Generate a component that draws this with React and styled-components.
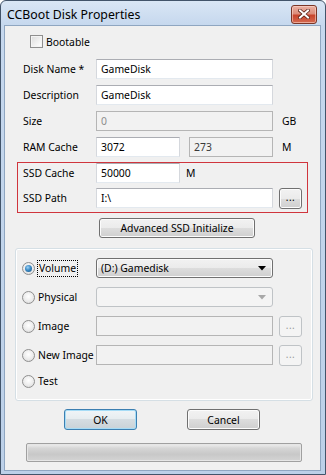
import React from "react";
import styled, { createGlobalStyle, css } from "styled-components";

const GlobalStyle = createGlobalStyle`
  html, body { margin: 0; padding: 0; background: #ffffff; }
  body { font-family: "Noto Sans", "Open Sans", sans-serif; font-size: 10.4px; color: #000; }
  * { box-sizing: border-box; }
`;

const Window = styled.div`
  width: 326px;
  height: 475px;
  display: flex;
  flex-direction: column;
  border: 1px solid #42546a;
  border-radius: 6px 6px 0 0;
  background: linear-gradient(to bottom, #d9e6f5 0px, #c6d8ee 24px, #bcd0e8 100%);
  overflow: hidden;
`;

const TitleBar = styled.div`
  height: 24px;
  flex: none;
  display: flex;
  align-items: center;
  justify-content: space-between;
  padding: 0 8px 0 6px;
`;

const Title = styled.span`
  font-size: 12.3px;
  color: #000;
  margin-top: 2px;
  white-space: nowrap;
`;

const CloseButton = styled.div`
  width: 26px;
  height: 19px;
  margin-top: 2px;
  border: 1px solid #7a3526;
  border-radius: 3px;
  background: linear-gradient(to bottom, #eab0a2 0%, #dc8d7b 45%, #c8442c 55%, #d56a50 100%);
  box-shadow: inset 0 0 0 1px rgba(255, 220, 210, 0.55);
  display: flex;
  align-items: center;
  justify-content: center;
`;

const Client = styled.div`
  flex: 1;
  margin: 0 4px 3px 3px;
  border: 1px solid #8fa6c1;
  background: #f0f0f0;
  display: flex;
  flex-direction: column;
  white-space: nowrap;
`;

const CheckRow = styled.label`
  display: flex;
  align-items: center;
  gap: 3px;
  margin: 9px 0 0 25px;
  height: 13px;
`;

const CheckBox = styled.span`
  width: 13px;
  height: 13px;
  border: 1px solid #8f8f8f;
  background: linear-gradient(135deg, #dcdcdc 0%, #f6f6f6 70%, #ffffff 100%);
  box-shadow: inset 0 0 0 1px #f4f4f4;
`;

const Form = styled.div`
  display: flex;
  flex-direction: column;
  gap: 6px;
  margin: 11px 0 0 18px;
`;

const Row = styled.div`
  display: flex;
  align-items: center;
  height: 20px;
`;

const Label = styled.span`
  width: 73px;
  flex: none;
`;

const Fields = styled.div`
  display: flex;
  gap: 9px;
  width: ${(p) => p.$w || 177}px;
`;

const Box = styled.div`
  height: 20px;
  flex: 1;
  display: flex;
  align-items: center;
  padding-left: 4px;
  border: 1px solid;
  border-color: #abadb3 #d5d8dd #e3e9ef #d5d8dd;
  background: #ffffff;
  color: #000;
  ${(p) =>
    p.$disabled &&
    css`
      background: #f2f2f2;
      border-color: #b5b5b5;
      color: ${p.$dim ? "#8d8d8d" : "#3a3a3a"};
    `}
`;

const Suffix = styled.span`
  margin-left: ${(p) => p.$gap ?? 9}px;
`;

const SsdBox = styled.div`
  margin: 5px 0 0 12px;
  width: 291px;
  border: 1px solid #d0353d;
  padding: 0 0 4px 5px;
  display: flex;
  flex-direction: column;
  gap: 5px;
`;

const buttonBase = css`
  display: flex;
  align-items: center;
  justify-content: center;
  border: 1px solid #707070;
  border-radius: 3px;
  background: linear-gradient(to bottom, #f2f2f2 0%, #ebebeb 50%, #dddddd 50%, #cfcfcf 100%);
  box-shadow: inset 0 0 0 1px #fcfcfc;
  color: #000;
`;

const Button = styled.div`
  ${buttonBase};
  width: ${(p) => p.$w}px;
  height: ${(p) => p.$h || 20}px;
  ${(p) =>
    p.$default &&
    css`
      border-color: #3c7fb1;
      box-shadow: inset 0 0 0 1px #a6dcf6;
      background: linear-gradient(to bottom, #f0f5f8 0%, #e6ecef 50%, #d5dde2 50%, #c9d2d7 100%);
    `}
`;

const BrowseButton = styled.div`
  ${buttonBase};
  width: 23px;
  height: 21px;
  margin-left: 6px;
  font-size: 10px;
  letter-spacing: 0.5px;
  padding-bottom: 3px;
  ${(p) =>
    p.$disabled &&
    css`
      border-color: #bfc3c6;
      background: #f4f4f4;
      box-shadow: none;
      color: #9a9a9a;
    `}
`;

const AdvancedRow = styled.div`
  margin: 5px 0 0 94px;
`;

const Group = styled.div`
  margin: 10px 0 0 10px;
  width: 298px;
  height: 153px;
  border: 1px solid #d5dfe5;
  border-radius: 3px;
  box-shadow: inset 0 0 0 1px #ffffff;
  padding: 9px 0 0 6px;
  display: flex;
  flex-direction: column;
  gap: 9px;
`;

const GroupRow = styled.div`
  display: flex;
  align-items: center;
  height: ${(p) => p.$h || 20}px;
`;

const RadioLabel = styled.div`
  width: 74px;
  flex: none;
  display: flex;
  align-items: center;
  gap: 3px;
`;

const Radio = styled.span`
  width: 13px;
  height: 13px;
  flex: none;
  border-radius: 50%;
  border: 1px solid #8f8f8f;
  background: radial-gradient(circle at 50% 40%, #ffffff 0%, #ececec 55%, #d3d3d3 100%);
  display: flex;
  align-items: center;
  justify-content: center;
  &::after {
    content: "";
    display: ${(p) => (p.$on ? "block" : "none")};
    width: 7px;
    height: 7px;
    border-radius: 50%;
    background: radial-gradient(circle at 40% 35%, #9fd3f5 0%, #3b8ac5 45%, #16507f 100%);
  }
`;

const FocusText = styled.span`
  outline: 1px dotted #000;
  outline-offset: 0;
  padding: 0 1px;
  line-height: 15px;
`;

const Combo = styled.div`
  width: 177px;
  height: 20px;
  display: flex;
  align-items: center;
  justify-content: space-between;
  padding: 0 6px 0 4px;
  border: 1px solid #707070;
  border-radius: 3px;
  background: linear-gradient(to bottom, #f2f2f2 0%, #ebebeb 50%, #dddddd 50%, #cfcfcf 100%);
  box-shadow: inset 0 0 0 1px #fcfcfc;
  ${(p) =>
    p.$disabled &&
    css`
      border-color: #bfc3c6;
      background: #f4f4f4;
      box-shadow: none;
    `}
`;

const Field = styled(Box)`
  flex: none;
  width: 177px;
`;

const ButtonRow = styled.div`
  display: flex;
  gap: 50px;
  margin: 8px 0 0 59px;
`;

const Progress = styled.div`
  margin: 13px 0 0 21px;
  width: 276px;
  height: 19px;
  border: 1px solid #a0a0a0;
  border-radius: 2px;
  background: linear-gradient(to bottom, #efefef 0%, #d6d6d6 25%, #c8c8c8 60%, #d4d4d4 100%);
  box-shadow: inset 0 0 0 1px #e6e6e6;
`;

const Arrow = ({ color }) => (
  <svg width="8" height="5" viewBox="0 0 8 5">
    <path d="M0 0 H8 L4 4.5 Z" fill={color} />
  </svg>
);

export default function App() {
  return (
    <>
      <GlobalStyle />
      <Window>
        <TitleBar>
          <Title>CCBoot Disk Properties</Title>
          <CloseButton>
            <svg width="12" height="10" viewBox="0 0 12 10">
              <path d="M2 1.5 L10 8.5 M10 1.5 L2 8.5" stroke="#5a2318" strokeWidth="3.6" strokeLinecap="square" />
              <path d="M2 1.5 L10 8.5 M10 1.5 L2 8.5" stroke="#ffffff" strokeWidth="2" strokeLinecap="square" />
            </svg>
          </CloseButton>
        </TitleBar>
        <Client>
          <CheckRow>
            <CheckBox />
            <span>Bootable</span>
          </CheckRow>

          <Form>
            <Row>
              <Label>Disk Name *</Label>
              <Fields>
                <Box>GameDisk</Box>
              </Fields>
            </Row>
            <Row>
              <Label>Description</Label>
              <Fields>
                <Box>GameDisk</Box>
              </Fields>
            </Row>
            <Row>
              <Label>Size</Label>
              <Fields>
                <Box $disabled $dim>0</Box>
              </Fields>
              <Suffix>GB</Suffix>
            </Row>
            <Row>
              <Label>RAM Cache</Label>
              <Fields>
                <Box>3072</Box>
                <Box $disabled>273</Box>
              </Fields>
              <Suffix>M</Suffix>
            </Row>
          </Form>

          <SsdBox>
            <Row>
              <Label>SSD Cache</Label>
              <Fields $w={84}>
                <Box>50000</Box>
              </Fields>
              <Suffix $gap={6}>M</Suffix>
            </Row>
            <Row>
              <Label>SSD Path</Label>
              <Fields>
                <Box>I:\</Box>
              </Fields>
              <BrowseButton>...</BrowseButton>
            </Row>
          </SsdBox>

          <AdvancedRow>
            <Button $w={156}>Advanced SSD Initialize</Button>
          </AdvancedRow>

          <Group>
            <GroupRow>
              <RadioLabel>
                <Radio $on />
                <FocusText>Volume</FocusText>
              </RadioLabel>
              <Combo>
                <span>(D:) Gamedisk</span>
                <Arrow color="#000" />
              </Combo>
            </GroupRow>
            <GroupRow>
              <RadioLabel>
                <Radio />
                <span>Physical</span>
              </RadioLabel>
              <Combo $disabled>
                <span />
                <Arrow color="#a8a8a8" />
              </Combo>
            </GroupRow>
            <GroupRow>
              <RadioLabel>
                <Radio />
                <span>Image</span>
              </RadioLabel>
              <Field $disabled />
              <BrowseButton $disabled>...</BrowseButton>
            </GroupRow>
            <GroupRow>
              <RadioLabel>
                <Radio />
                <span>New Image</span>
              </RadioLabel>
              <Field $disabled />
              <BrowseButton $disabled>...</BrowseButton>
            </GroupRow>
            <GroupRow $h={14}>
              <RadioLabel>
                <Radio />
                <span>Test</span>
              </RadioLabel>
            </GroupRow>
          </Group>

          <ButtonRow>
            <Button $w={73} $h={21} $default>OK</Button>
            <Button $w={73} $h={21}>Cancel</Button>
          </ButtonRow>

          <Progress />
        </Client>
      </Window>
    </>
  );
}
